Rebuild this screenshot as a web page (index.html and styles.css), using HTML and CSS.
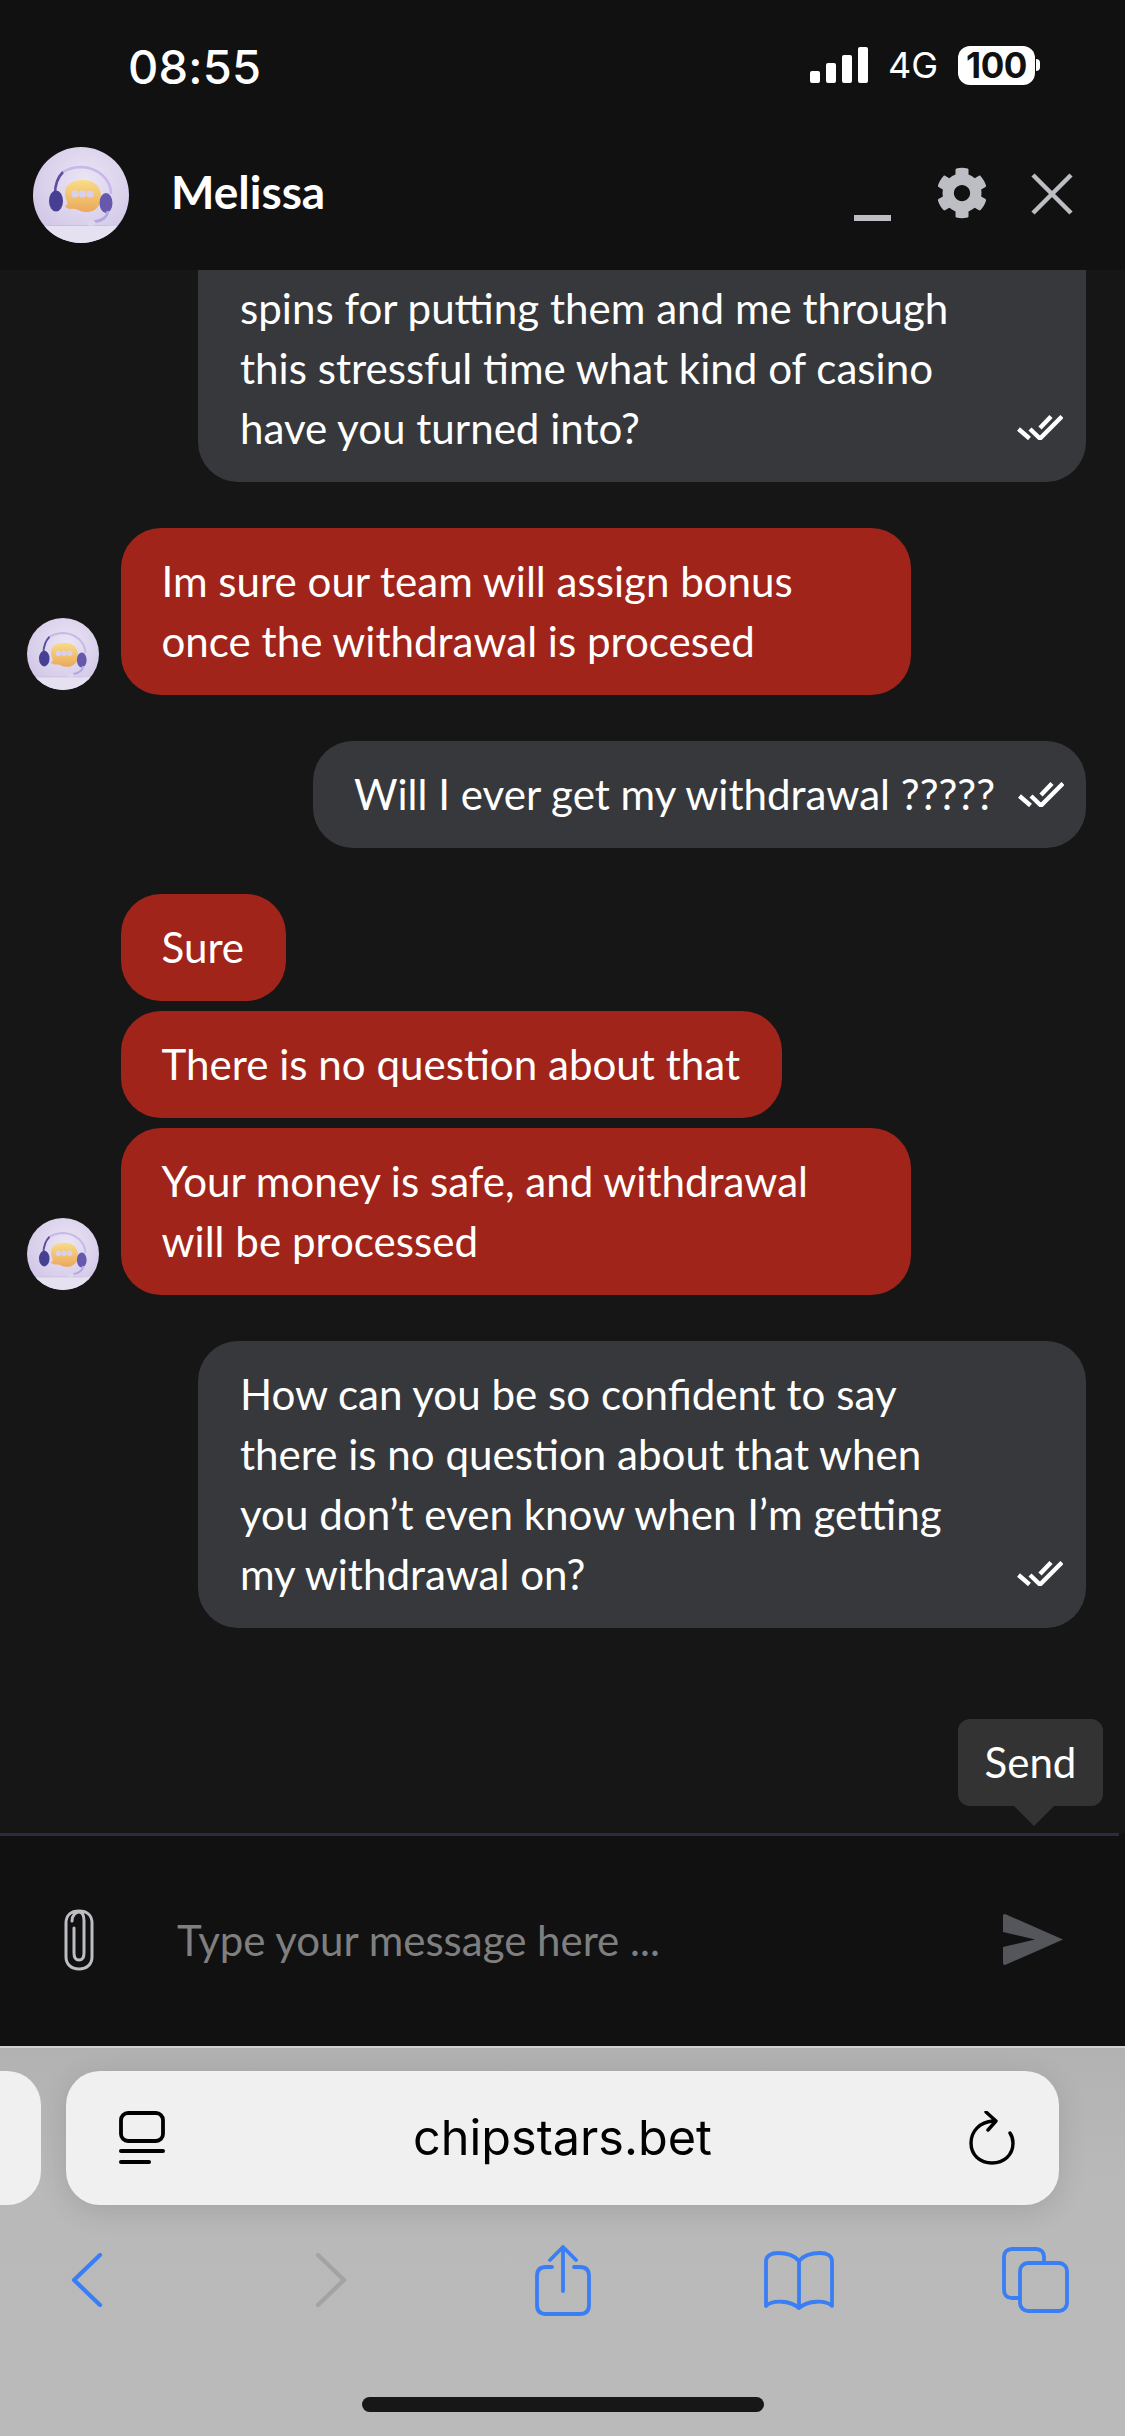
FILE: index.html
```
<!DOCTYPE html>
<html lang="en">
<head>
<meta charset="utf-8">
<title>Melissa chat</title>
<link rel="stylesheet" href="styles.css">
</head>
<body>
<svg class="defs" width="0" height="0" aria-hidden="true">
  <defs>
    <radialGradient id="avbg" cx="0.55" cy="0.35" r="0.75"><stop offset="0" stop-color="#ebe5f5"/><stop offset="1" stop-color="#cdc2e4"/></radialGradient>
    <linearGradient id="bub" x1="0" y1="0" x2="0" y2="1"><stop offset="0" stop-color="#f9dc86"/><stop offset="1" stop-color="#eaa95c"/></linearGradient>
    <filter id="soft"><feGaussianBlur stdDeviation="0.5"/></filter>
    <clipPath id="avclip"><circle cx="48" cy="48" r="48"/></clipPath>
    <symbol id="avatar" viewBox="0 0 96 96">
      <g clip-path="url(#avclip)">
        <rect width="96" height="96" fill="url(#avbg)"/>
        <rect x="0" y="79" width="96" height="17" fill="#e6e1f1"/>
        <rect x="14" y="78" width="62" height="1" fill="#c9bfe0"/>
      </g>
      <g filter="url(#soft)">
        <path d="M30 25C38 20 44 20 49 20C66 21 78 33 78 47" fill="none" stroke="#c6b8e8" stroke-width="2.600"/>
        <path d="M22 47C22 37 25 30 30 25" fill="none" stroke="#5a4fa0" stroke-width="2.600"/>
        <path d="M32 44C33 37 40 33 50 33C60 33 68 38 68 50C68 60 61 66 52 65C47 65 44 61 38 62C35 62 33 61 32 59C34 58 35 56 34 54C32 51 32 48 32 44Z" fill="url(#bub)"/>
        <circle cx="42" cy="47" r="3.600" fill="#d9d0f0"/><circle cx="49.500" cy="47" r="3.600" fill="#d9d0f0"/><circle cx="57" cy="47" r="3.600" fill="#d9d0f0"/>
        <ellipse cx="23" cy="54" rx="7" ry="10.500" fill="#474092"/>
        <ellipse cx="73" cy="56" rx="6.500" ry="10" fill="#6659ac"/>
        <path d="M75 64C74 71 69 74 60 75" fill="none" stroke="#b5a6dd" stroke-width="2.600"/>
        <ellipse cx="58" cy="76" rx="4.500" ry="3" fill="#dcd6ec"/>
      </g>
    </symbol>
    <symbol id="check" viewBox="0 0 46 25">
      <path d="M1.500 14L12.500 23.500M13 14L23 23.500L45 1.500M23 13L34 1.500" fill="none" stroke="#fff" stroke-width="4.400"/>
    </symbol>
  </defs>
</svg>
<main class="phone">
  <header class="top">
    <div class="status">
      <span class="time">08:55</span>
      <div class="sys">
        <svg class="signal" viewBox="0 0 58 36"><rect x="0" y="24" width="10" height="12" rx="2"/><rect x="16" y="16" width="10" height="20" rx="2"/><rect x="32" y="8" width="10" height="28" rx="2"/><rect x="48" y="0" width="10" height="36" rx="2"/></svg>
        <span class="net">4G</span>
        <span class="batt">100</span><span class="nub"></span>
      </div>
    </div>
    <div class="head">
      <svg class="av-big"><use href="#avatar"/></svg>
      <span class="name">Melissa</span>
      <span class="min"></span>
      <svg class="gear" viewBox="0 0 512 512"><path fill="#bcbec4" d="M487.400 315.700l-42.600-24.600c4.300-23.200 4.300-47 0-70.200l42.600-24.600c4.900-2.800 7.100-8.600 5.500-14-11.100-35.600-30-67.800-54.700-94.600-3.800-4.100-10-5.100-14.800-2.300L380.800 110c-17.900-15.400-38.500-27.300-60.800-35.100V25.800c0-5.600-3.900-10.500-9.400-11.700-36.700-8.200-74.300-7.800-109.200 0-5.500 1.200-9.400 6.100-9.400 11.700V75c-22.200 7.900-42.800 19.800-60.800 35.100L88.700 85.500c-4.900-2.800-11-1.900-14.800 2.300-24.700 26.700-43.600 58.900-54.700 94.600-1.700 5.400.6 11.200 5.500 14L67.300 221c-4.300 23.200-4.300 47 0 70.200l-42.600 24.600c-4.900 2.800-7.100 8.600-5.500 14 11.100 35.600 30 67.800 54.700 94.600 3.800 4.100 10 5.100 14.800 2.300l42.600-24.600c17.900 15.400 38.500 27.300 60.800 35.100v49.200c0 5.600 3.900 10.500 9.400 11.700 36.700 8.200 74.300 7.800 109.200 0 5.500-1.200 9.400-6.100 9.400-11.700v-49.200c22.200-7.900 42.800-19.800 60.800-35.100l42.600 24.600c4.900 2.800 11 1.900 14.800-2.300 24.700-26.700 43.600-58.900 54.700-94.600 1.500-5.500-.7-11.300-5.600-14.100zM256 336c-44.100 0-80-35.900-80-80s35.900-80 80-80 80 35.900 80 80-35.900 80-80 80z"/></svg>
      <svg class="close" viewBox="0 0 42 42"><path d="M2 2L40 40M40 2L2 40" stroke="#bcbec4" stroke-width="4.500" fill="none"/></svg>
    </div>
  </header>

  <section class="chat">
    <div class="msg out clipped">spins for putting them and me through<br>this stressful time what kind of casino<br>have you turned into?<svg class="tick"><use href="#check"/></svg></div>

    <div class="in-row">
      <svg class="av-small"><use href="#avatar"/></svg>
      <div class="stack">
        <div class="msg in wide">Im sure our team will assign bonus<br>once the withdrawal is procesed</div>
      </div>
    </div>

    <div class="msg out single">Will I ever get my withdrawal ?????<svg class="tick-inline"><use href="#check"/></svg></div>

    <div class="in-row">
      <svg class="av-small"><use href="#avatar"/></svg>
      <div class="stack">
        <div class="msg in">Sure</div>
        <div class="msg in">There is no question about that</div>
        <div class="msg in wide">Your money is safe, and withdrawal<br>will be processed</div>
      </div>
    </div>

    <div class="msg out">How can you be so confident to say<br>there is no question about that when<br>you don’t even know when I’m getting<br>my withdrawal on?<svg class="tick"><use href="#check"/></svg></div>

    <div class="tooltip">Send</div>
  </section>

  <section class="composer">
    <svg class="clip" viewBox="0 0 32 62"><path d="M11 19V44C11 49 13 51 16 51S21 49 21 44V12C21 6 19 3 16 3S9 6 9 12M3 14V48C3 55 8 60 16 60S29 55 29 48V14C29 6 24 2 16 2S3 6 3 14" fill="none" stroke="#bcbec4" stroke-width="3" stroke-linecap="round"/></svg>
    <span class="placeholder">Type your message here ...</span>
    <svg class="send" viewBox="0 0 60 51"><path d="M2 0L60 25.500L2 51C0 51 0 50 0 48V33L32 25.500L0 18V3C0 1 0 0 2 0Z" fill="#54565b"/></svg>
  </section>

  <footer class="browser">
    <div class="url-row">
      <div class="prev-tab"></div>
      <div class="url">
        <svg class="tabicon" viewBox="0 0 46 54"><rect x="2" y="2" width="42" height="28" rx="7" fill="none" stroke="#000" stroke-width="3.800"/><rect x="0" y="38" width="46" height="4" rx="2"/><rect x="0" y="49" width="32" height="4" rx="2"/></svg>
        <span class="domain">chipstars.bet</span>
        <svg class="reload" viewBox="0 0 46 54"><path d="M24 10C11 11 2 20 2 32C2 44 11 52 23 52S44 44 44 32C44 28 43 25 41 22M17 1L27 10L19 19" fill="none" stroke="#000" stroke-width="3.400" stroke-linecap="round" stroke-linejoin="round"/></svg>
      </div>
    </div>
    <nav class="tools">
      <svg class="ico chev" viewBox="0 0 32 54"><path d="M29 2L3 27L29 52" fill="none" stroke="#3a7ef5" stroke-width="4.200" stroke-linecap="round" stroke-linejoin="round"/></svg>
      <svg class="ico chev" viewBox="0 0 32 54"><path d="M3 2L29 27L3 52" fill="none" stroke="#a3a3a3" stroke-width="4.200" stroke-linecap="round" stroke-linejoin="round"/></svg>
      <svg class="ico share" viewBox="0 0 56 71"><path d="M17 22H11C5 22 2 25 2 31V60C2 66 5 69 11 69H45C51 69 54 66 54 60V31C54 25 51 22 45 22H39M28 46V3M15 15L28 2L41 15" fill="none" stroke="#3a7ef5" stroke-width="3.800" stroke-linecap="round" stroke-linejoin="round"/></svg>
      <svg class="ico book" viewBox="0 0 70 59"><path d="M35 10C30 4 22 2 14 2C7 2 2 5 2 10V55C8 49 26 49 35 57C44 49 62 49 68 55V10C68 5 63 2 56 2C48 2 40 4 35 10ZM35 10V57" fill="none" stroke="#3a7ef5" stroke-width="3.800" stroke-linejoin="round"/></svg>
      <svg class="ico tabs" viewBox="0 0 67 66"><path d="M42 16V10C42 5 39 2 34 2H10C5 2 2 5 2 10V43C2 48 5 51 10 51H18" fill="none" stroke="#3a7ef5" stroke-width="3.800"/><rect x="18" y="16" width="47" height="48" rx="8" fill="none" stroke="#3a7ef5" stroke-width="3.800"/></svg>
    </nav>
    <div class="home"></div>
  </footer>
</main>
</body>
</html>
```

FILE: styles.css
```
* { box-sizing: border-box; }
html, body { margin: 0; padding: 0; background: #161616; }
.defs { position: absolute; }
.phone {
  width: 1125px;
  height: 2436px;
  display: flex;
  flex-direction: column;
  overflow: hidden;
  font-family: Lato, "Open Sans", sans-serif;
  color: #fff;
}
.top { background: #111112; height: 270px; flex: none; }
.status {
  height: 130px;
  padding: 6px 0 0 128px;
  display: flex;
  justify-content: space-between;
  align-items: center;
}
.time { font: 500 47px/56px Inter, sans-serif; letter-spacing: 0.2px; margin-top: -2px; }
.sys { display: flex; align-items: center; padding-right: 85px; margin-top: -6px; }
.signal { width: 58px; height: 36px; fill: #fff; margin-right: 20px; }
.net { font: 400 36px/40px Inter, sans-serif; width: 70px; }
.batt {
  background: #fff;
  color: #111;
  width: 77px;
  height: 39px;
  border-radius: 12px;
  font: 700 35px/39px Inter, sans-serif;
  text-align: center;
  letter-spacing: -0.5px;
}
.nub { width: 4px; height: 12px; background: #fff; border-radius: 0 6px 6px 0; margin-left: 1px; }
.head {
  height: 140px;
  padding: 17px 52px 0 33px;
  display: flex;
  align-items: flex-start;
}
.av-big { width: 96px; height: 96px; flex: none; }
.name { font-weight: 700; font-size: 46px; line-height: 90px; margin-left: 42px; flex: 1; }
.min { width: 37px; height: 6px; background: #bcbec4; margin: 68px 45px 0 0; }
.gear { width: 52px; height: 52px; margin: 20px 43px 0 0; }
.close { width: 42px; height: 42px; margin-top: 26px; }

.chat {
  flex: 1;
  position: relative;
  background: #161616;
  display: flex;
  flex-direction: column;
  align-items: flex-end;
  padding: 0 39px 0 27px;
  gap: 46px;
}
.msg {
  font-size: 42.1px;
  line-height: 60px;
  padding: 23.5px 42px 23.5px 40.5px;
  border-radius: 40px;
  position: relative;
}
.out { background: #37383b; width: 888px; padding-left: 42px; }
.clipped { border-radius: 0 0 40px 40px; padding-top: 8px; }
.out.single { width: auto; padding-left: 41px; padding-right: 22px; display: flex; align-items: center; }
.tick { position: absolute; right: 23px; bottom: 42px; width: 46px; height: 25px; }
.tick-inline { width: 46px; height: 25px; margin-left: 23px; }
.in-row { align-self: stretch; display: flex; align-items: flex-end; gap: 22px; }
.av-small { width: 72px; height: 72px; flex: none; margin-bottom: 5px; }
.stack { display: flex; flex-direction: column; align-items: flex-start; gap: 10px; }
.in { background: #a0241a; }
.wide { width: 790px; }

.tooltip {
  position: absolute;
  left: 958px;
  bottom: 27px;
  width: 145px;
  height: 87px;
  background: #333;
  border-radius: 12px;
  font-size: 42px;
  line-height: 87px;
  text-align: center;
}
.tooltip::after {
  content: "";
  position: absolute;
  left: 56px;
  top: 87px;
  border-left: 20px solid transparent;
  border-right: 20px solid transparent;
  border-top: 20px solid #333;
}

.composer {
  height: 213px;
  flex: none;
  background: #111112;
  display: flex;
  align-items: center;
  padding: 0 62px 0 63px;
  position: relative;
}
.composer::before {
  content: "";
  position: absolute;
  left: 0;
  top: 0;
  width: 1119px;
  height: 3px;
  background: #2a2e3c;
}
.clip { width: 32px; height: 62px; flex: none; }
.placeholder { font-size: 42px; color: #7f7f7f; margin-left: 82px; flex: 1; }
.send { width: 60px; height: 51px; flex: none; }

.browser {
  height: 390px;
  flex: none;
  background: linear-gradient(#b2b2b2, #b9b9b9 35%, #bababa);
  border-top: 2px solid #d0d0d0;
  display: flex;
  flex-direction: column;
}
.url-row { display: flex; gap: 25px; padding-top: 23px; height: 157px; }
.prev-tab { width: 41px; height: 134px; background: #f0f0f0; border-radius: 0 34px 34px 0; flex: none; }
.url {
  width: 993px;
  height: 134px;
  background: #f0f0f0;
  border-radius: 34px;
  box-shadow: 0 6px 30px rgba(0, 0, 0, .12);
  display: flex;
  align-items: center;
  justify-content: space-between;
  padding: 0 44px 0 53px;
}
.tabicon { width: 46px; height: 54px; }
.reload { width: 46px; height: 54px; }
.domain { font: 400 48.6px/60px Inter, "Liberation Sans", sans-serif; color: #000; margin-right: 9px; }
.tools { display: flex; height: 100px; align-items: center; padding: 14px 0 0 71px; margin-top: 18px; }
.ico { flex: none; }
.chev { width: 32px; height: 54px; margin-right: 212px; }
.share { width: 56px; height: 71px; margin-left: -24px; margin-right: 173px; }
.book { width: 70px; height: 59px; margin-right: 168px; }
.tabs { width: 67px; height: 66px; }
.home { width: 402px; height: 15px; border-radius: 8px; background: #171717; margin: 74px 0 0 362px; }
```
